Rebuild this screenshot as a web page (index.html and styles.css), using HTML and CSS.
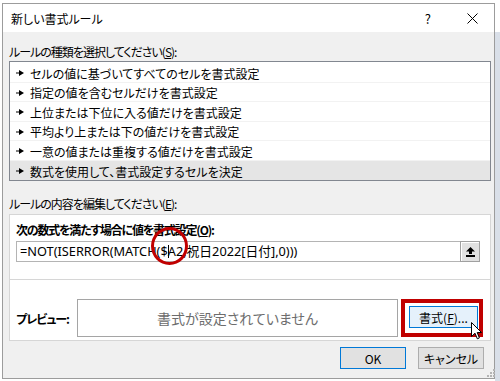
FILE: index.html
```html
<!DOCTYPE html>
<html lang="ja">
<head>
    <meta charset="UTF-8">
    <meta name="viewport" content="width=device-width, initial-scale=1.0">
    <title>新しい書式ルール</title>
    <link rel="stylesheet" href="styles.css">
</head>
<body>
    <div class="dialog">
        <div class="titlebar">
            <span class="title">新しい書式ルール</span>
            <span class="help">?</span>
            <svg class="close" width="11" height="11" viewBox="0 0 11 11">
                <path d="M0.5 0.5L10.5 10.5M10.5 0.5L0.5 10.5" stroke="#000" stroke-width="1"/>
            </svg>
        </div>

        <div class="content">
            <div class="label">ルールの種類を選択してください(<u>S</u>):</div>
            <ul class="rule-list">
                <li><svg class="arrow" width="8" height="6" viewBox="0 0 8 6"><path d="M0 2.5h3v1H0z M3 0L8 3L3 6z" fill="#000"/></svg>セルの値に基づいてすべてのセルを書式設定</li>
                <li><svg class="arrow" width="8" height="6" viewBox="0 0 8 6"><path d="M0 2.5h3v1H0z M3 0L8 3L3 6z" fill="#000"/></svg>指定の値を含むセルだけを書式設定</li>
                <li><svg class="arrow" width="8" height="6" viewBox="0 0 8 6"><path d="M0 2.5h3v1H0z M3 0L8 3L3 6z" fill="#000"/></svg>上位または下位に入る値だけを書式設定</li>
                <li><svg class="arrow" width="8" height="6" viewBox="0 0 8 6"><path d="M0 2.5h3v1H0z M3 0L8 3L3 6z" fill="#000"/></svg>平均より上または下の値だけを書式設定</li>
                <li><svg class="arrow" width="8" height="6" viewBox="0 0 8 6"><path d="M0 2.5h3v1H0z M3 0L8 3L3 6z" fill="#000"/></svg>一意の値または重複する値だけを書式設定</li>
                <li class="selected"><svg class="arrow" width="8" height="6" viewBox="0 0 8 6"><path d="M0 2.5h3v1H0z M3 0L8 3L3 6z" fill="#000"/></svg>数式を使用して、書式設定するセルを決定</li>
            </ul>

            <div class="label label-edit">ルールの内容を編集してください(<u>E</u>):</div>
            <div class="group">
                <div class="formula-section">
                    <div class="heading">次の数式を満たす場合に値を書式設定(<u>O</u>):</div>
                    <div class="formula-row">
                        <div class="formula-input">=NOT(ISERROR(MATCH($<span class="caret"></span>A2,祝日2022[日付],0)))</div>
                        <button class="collapse-btn">
                            <svg width="9" height="10" viewBox="0 0 9 10">
                                <path d="M4.5 0L9 4.5H6V7H3V4.5H0z" fill="#000"/>
                                <rect x="0" y="8" width="9" height="2" fill="#000"/>
                            </svg>
                        </button>
                        <span class="mark-circle"></span>
                    </div>
                </div>
                <div class="preview-section">
                    <div class="preview-label">プレビュー:</div>
                    <div class="preview-box">書式が設定されていません</div>
                    <div class="mark-box">
                        <button class="format-btn">書式(<u>F</u>)...</button>
                    </div>
                </div>
            </div>

            <div class="buttons">
                <button class="btn btn-default">OK</button>
                <button class="btn">キャンセル</button>
            </div>
        </div>

        <svg class="cursor" width="11" height="18" viewBox="0 0 11 18">
            <path d="M0.5 0.5V14.5L4 11.2L6.3 16.8L8.4 15.9L6.2 10.5H10.5z" fill="#fff" stroke="#000" stroke-width="1"/>
        </svg>
        <svg class="grip" width="9" height="9" viewBox="0 0 9 9">
            <rect x="7" y="1" width="2" height="2" fill="#b4b4b4"/>
            <rect x="4" y="4" width="2" height="2" fill="#b4b4b4"/>
            <rect x="7" y="4" width="2" height="2" fill="#b4b4b4"/>
            <rect x="1" y="7" width="2" height="2" fill="#b4b4b4"/>
            <rect x="4" y="7" width="2" height="2" fill="#b4b4b4"/>
            <rect x="7" y="7" width="2" height="2" fill="#b4b4b4"/>
        </svg>
    </div>
</body>
</html>
```

FILE: styles.css
```css
* {
    margin: 0;
    padding: 0;
    box-sizing: border-box;
    font-family: "Noto Sans CJK JP", "Noto Sans", sans-serif;
    font-feature-settings: "palt";
}

html {
    background: linear-gradient(#fff 32px, #d9dfe8 32px) right top / 5px 100% no-repeat, #fff;
}

body {
    width: 500px;
    height: 381px;
    overflow: hidden;
    padding: 3px 0 0 2px;
}

.dialog {
    position: relative;
    width: 493px;
    height: 376px;
    border: 1px solid #9c9c9c;
    background: #f0f0f0;
    font-size: 12px;
    color: #000;
}

.titlebar {
    height: 28px;
    background: #fff;
    display: flex;
    align-items: center;
    padding-left: 8px;
}

.title {
    flex: 1;
    font-size: 12px;
}

.help {
    font-size: 13px;
    margin-right: 36px;
}

.close {
    margin-right: 16px;
}

.content {
    padding: 12px 3px 0 6px;
}

.label {
    line-height: 16px;
    height: 16px;
    margin-bottom: 1px;
    letter-spacing: -1px;
}

.rule-list {
    list-style: none;
    background: #fff;
    border: 1px solid #828790;
    padding-top: 1px;
    height: 120px;
}

.rule-list li {
    height: 19.5px;
    display: flex;
    align-items: center;
    padding: 2px 0 0 6px;
    border-bottom: 1px solid #f2f2f2;
}

.rule-list li.selected {
    background: #e5e5e5;
    border-bottom: none;
}

.arrow {
    margin-right: 6px;
}

.label-edit {
    margin-top: 15px;
    margin-bottom: 2px;
}

.group {
    background: #fff;
    border: 1px solid #d6d6d6;
}

.formula-section {
    padding: 7px 10px 17px 6px;
    border-bottom: 1px solid #d6d6d6;
}

.heading {
    font-weight: bold;
    line-height: 16px;
    margin-bottom: 3px;
    letter-spacing: -1.2px;
}

.formula-row {
    position: relative;
    display: flex;
    height: 21px;
}

.formula-input {
    flex: 1;
    border: 1px solid #b4b4b4;
    border-right: none;
    padding-left: 3px;
    line-height: 19px;
    font-family: "Noto Sans", "Noto Sans CJK JP", sans-serif;
    font-size: 12.75px;
    white-space: nowrap;
}

.caret {
    display: inline-block;
    width: 1px;
    height: 13px;
    background: #000;
    vertical-align: -2px;
    margin: 0 -1px 0 0;
}

.collapse-btn {
    width: 20px;
    height: 21px;
    background: #e1e1e1;
    border: 1px solid #a0a0a0;
    box-shadow: inset 1px 1px 0 #fff;
    display: flex;
    align-items: center;
    justify-content: center;
}

.mark-circle {
    position: absolute;
    left: 135px;
    top: -14px;
    width: 37px;
    height: 38px;
    border: 3px solid #c00000;
    border-radius: 50%;
}

.preview-section {
    display: flex;
    align-items: center;
    padding: 19px 6px 3px 6px;
}

.preview-label {
    width: 61px;
    font-weight: bold;
    letter-spacing: -1px;
}

.preview-box {
    width: 321px;
    height: 38px;
    border: 1px solid #a5a5a5;
    display: flex;
    align-items: center;
    justify-content: center;
    color: #6d6d6d;
    font-size: 14px;
    margin-right: 3px;
}

.mark-box {
    width: 82px;
    height: 38px;
    border: 4px solid #c00000;
    padding: 3px 1px 3px 4px;
}

.format-btn {
    width: 69px;
    height: 22px;
    background: #e5f1fb;
    border: 1px solid #0078d7;
    font-size: 12px;
}

.buttons {
    display: flex;
    justify-content: flex-end;
    gap: 12px;
    margin-top: 6px;
    margin-right: 7px;
}

.btn {
    width: 66px;
    height: 22px;
    background: #e1e1e1;
    border: 1px solid #adadad;
    font-size: 12px;
}

.btn-default {
    border-color: #0078d7;
}

.cursor {
    position: absolute;
    left: 468px;
    top: 318px;
}

.grip {
    position: absolute;
    left: 483px;
    top: 364px;
}
```
